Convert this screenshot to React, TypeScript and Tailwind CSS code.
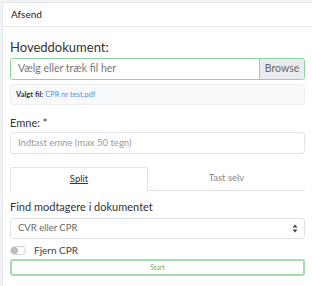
import React from "react";

export default function App() {
  return (
    <div className="w-[312px] h-[286px] bg-[#f1f2f4] pt-[2px] pl-[2px] overflow-hidden" style={{ fontFamily: "Lato, 'Open Sans', sans-serif" }}>
      <div className="bg-white w-[320px] h-[300px] border-l border-t border-[#e6e8eb]">
        <div className="h-[24px] flex items-center pl-[8px] border-b border-[#e3e5e8] text-[10px] text-[#222]">Afsend</div>
        <div className="pl-[7px] w-[302px] pt-[12px]">
          <div className="text-[13px] text-[#333] leading-[16px]">Hoveddokument:</div>
          <div className="mt-[3px] h-[22px] flex border border-[#8fd49a] rounded-[3px] overflow-hidden">
            <div className="flex-1 flex items-center pl-[7px] text-[10.5px] text-[#777]">Vælg eller træk fil her</div>
            <div className="w-[45px] flex items-center justify-center bg-[#e9ecef] border-l border-[#8fd49a] text-[10.5px] text-[#666]">Browse</div>
          </div>
          <div className="mt-[4px] h-[21px] flex items-center pl-[5px] bg-[#f8f9fa] border border-[#eceef0] rounded-[3px] text-[7.5px]">
            <span className="font-bold text-[#333]">Valgt fil:</span>
            <span className="ml-[2px] text-[#5b8def]">CPR nr test.pdf</span>
          </div>
          <div className="mt-[11px] text-[11px] text-[#333] leading-[14px]">Emne: *</div>
          <div className="mt-[2px] h-[22px] flex items-center pl-[7px] border border-[#dfe2e6] rounded-[3px] text-[9.5px] text-[#999]">Indtast emne (max 50 tegn)</div>
          <div className="mt-[13px] flex h-[24px]">
            <div className="w-[138px] flex items-center justify-center border border-b-0 border-[#dfe2e6] rounded-t-[3px] text-[9.5px] text-[#333] underline">Split</div>
            <div className="flex-1 flex items-center justify-center border-b border-[#dfe2e6] text-[9.5px] text-[#888]">Tast selv</div>
          </div>
          <div className="mt-[9px] text-[11px] text-[#333] leading-[14px]">Find modtagere i dokumentet</div>
          <div className="mt-[4px] h-[21px] flex items-center justify-between pl-[7px] pr-[6px] border border-[#dfe2e6] rounded-[3px] text-[9.5px] text-[#666]">
            <span>CVR eller CPR</span>
            <svg width="6" height="9" viewBox="0 0 6 9"><path d="M3 0.5L5.5 3.5H0.5Z" fill="#444" /><path d="M3 8.5L5.5 5.5H0.5Z" fill="#444" /></svg>
          </div>
          <div className="mt-[5px] flex items-center h-[12px]">
            <div className="w-[16px] h-[9px] rounded-full border border-[#cfd3d8] bg-white relative">
              <div className="absolute left-[0px] top-[0px] w-[7px] h-[7px] rounded-full bg-[#b9bdc2]"></div>
            </div>
            <span className="ml-[8px] text-[10px] text-[#444]">Fjern CPR</span>
          </div>
          <div className="mt-[3px] h-[17px] flex items-center justify-center border-2 border-[#a6dcae] rounded-[3px] text-[7px] text-[#6cb37a]">Start</div>
        </div>
      </div>
    </div>
  );
}
